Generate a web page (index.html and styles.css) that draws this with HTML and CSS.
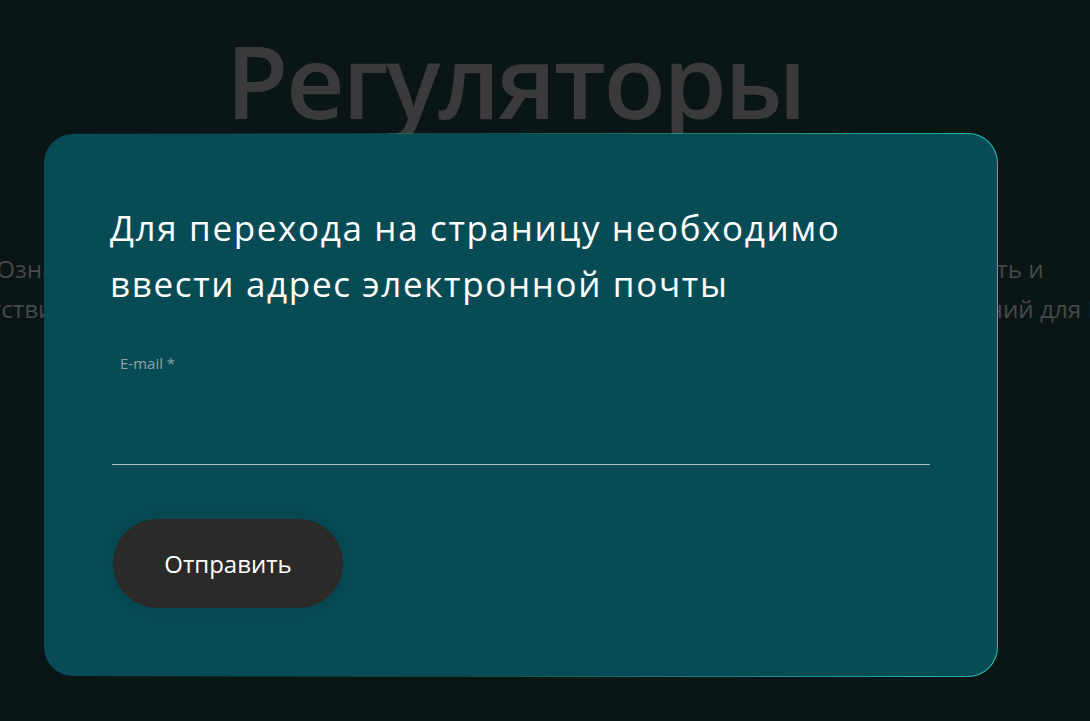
FILE: index.html
```html
<!DOCTYPE html>
<html lang="ru">
<head>
<meta charset="utf-8">
<title>Регуляторы</title>
<link rel="stylesheet" href="styles.css">
</head>
<body>
<main class="page">
  <section class="hero">
    <h1 class="hero-title">Регуляторы</h1>
    <div class="hero-text">
      <p class="hero-line">Ознакомьтесь с полным перечнем регуляторов, которые контролируют деятельность и</p>
      <p class="hero-line">соответствии с нормативами законодательства и внутренних документов, а также положений для ИП.</p>
    </div>
  </section>
</main>

<div class="modal" role="dialog" aria-labelledby="modal-title">
  <h2 class="modal-title" id="modal-title">Для перехода на страницу необходимо<br>ввести адрес электронной почты</h2>
  <form class="modal-form">
    <label class="field">
      <span class="field-label">E-mail *</span>
      <input class="field-input" type="email" name="email">
    </label>
    <button class="submit" type="button">Отправить</button>
  </form>
</div>
</body>
</html>
```

FILE: styles.css
```css
html, body {
  margin: 0;
  padding: 0;
}

body {
  background: #0a1516;
  font-family: "Open Sans", "Noto Sans", sans-serif;
  width: 1090px;
  height: 721px;
  overflow: hidden;
  position: relative;
}

.page {
  width: 1040px;
  padding-top: 10px;
}

.hero {
  display: flex;
  flex-direction: column;
  align-items: center;
}

.hero-title {
  margin: 0 10px 0 0;
  font-size: 102px;
  font-weight: 600;
  line-height: 140px;
  color: #3a3a3a;
  letter-spacing: -2.5px;
}

.hero-text {
  margin-top: 99px;
  display: flex;
  flex-direction: column;
  align-items: center;
}

.hero-line {
  margin: 0;
  white-space: nowrap;
  font-size: 24.25px;
  line-height: 40px;
  color: #474747;
}

.modal {
  position: absolute;
  left: 43px;
  top: 133px;
  width: 955px;
  height: 544px;
  box-sizing: border-box;
  border: 1px solid transparent;
  border-radius: 30px;
  background:
    linear-gradient(#074b55, #074b55) padding-box,
    linear-gradient(to right, rgba(30, 180, 168, 0) 0%, rgba(30, 180, 168, 0.35) 45%, #21c1b2 100%) border-box;
  padding: 66px 68px 0 66px;
  display: flex;
  flex-direction: column;
}

.modal-title {
  margin: 0;
  font-size: 35px;
  font-weight: 400;
  line-height: 56px;
  letter-spacing: 1.65px;
  color: #ffffff;
}

.modal-form {
  display: flex;
  flex-direction: column;
  align-items: flex-start;
  margin-top: 41px;
}

.field {
  display: flex;
  flex-direction: column;
  width: 818px;
  margin-left: 2px;
}

.field-label {
  font-size: 15px;
  line-height: 20px;
  color: #8ea3a6;
  padding-left: 8px;
}

.field-input {
  background: transparent;
  border: 0;
  border-bottom: 1px solid #a9c1c3;
  height: 91px;
  padding: 0;
  outline: none;
  color: #fff;
  font: inherit;
}

.submit {
  margin-top: 54px;
  margin-left: 3px;
  width: 230px;
  height: 89px;
  border: 0;
  border-radius: 45px;
  background: #2a2a28;
  color: #ffffff;
  font-family: "Open Sans", "Noto Sans", sans-serif;
  font-size: 24px;
  box-shadow: 0 0 22px rgba(0, 0, 0, 0.12);
  cursor: pointer;
}
```
